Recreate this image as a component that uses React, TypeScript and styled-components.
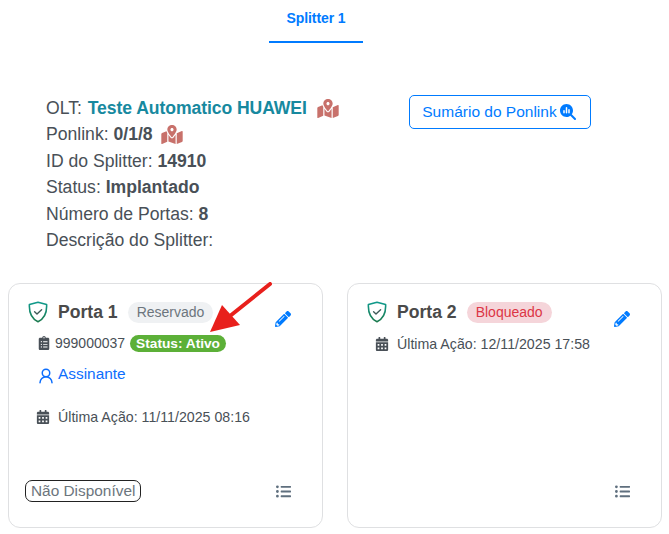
import React from 'react';
import styled, { createGlobalStyle } from 'styled-components';
import { FaMapMarkedAlt, FaPencilAlt, FaClipboardList, FaCalendarAlt, FaListUl } from 'react-icons/fa';
import { FaMagnifyingGlassChart } from 'react-icons/fa6';
import { LuUserRound } from 'react-icons/lu';

const GlobalStyle = createGlobalStyle`
  html, body {
    margin: 0;
    padding: 0;
    background: #fff;
    font-family: "Liberation Sans", Arial, sans-serif;
    color: #495057;
  }
`;

const ShieldIcon = ({ id }: { id: string }) => (
  <svg width="20" height="22" viewBox="0 0 20 22" fill="none">
    <defs>
      <linearGradient id={id} x1="0" y1="0" x2="0" y2="1">
        <stop offset="0" stopColor="#0f9a8c" />
        <stop offset="1" stopColor="#1c7a4e" />
      </linearGradient>
    </defs>
    <path
      d="M10 1.2 L18.6 3.6 C19 11 17 17.5 10 20.8 C3 17.5 1 11 1.4 3.6 Z"
      stroke={`url(#${id})`}
      strokeWidth="1.6"
      strokeLinejoin="round"
    />
    <path d="M6.6 10.8 L9 13 L13.6 8.8" stroke="#3f5a58" strokeWidth="1.4" strokeLinecap="round" strokeLinejoin="round" />
  </svg>
);

const App = () => {
  return (
    <Page>
      <GlobalStyle />
      <Tabs>
        <Tab>Splitter 1</Tab>
      </Tabs>

      <Summary>
        <Info>
          <Line>
            OLT: <OltLink>Teste Automatico HUAWEI</OltLink>
            <MapIcon />
          </Line>
          <Line>
            Ponlink: <b>0/1/8</b>
            <MapIcon />
          </Line>
          <Line>
            ID do Splitter: <b>14910</b>
          </Line>
          <Line>
            Status: <b>Implantado</b>
          </Line>
          <Line>
            Número de Portas: <b>8</b>
          </Line>
          <Line>Descrição do Splitter:</Line>
        </Info>
        <OutlineButton>
          Sumário do Ponlink
          <FaMagnifyingGlassChart size={16} />
        </OutlineButton>
      </Summary>

      <Cards>
        <Card>
          <CardHeader>
            <ShieldIcon id="shield-1" />
            <CardTitle>Porta 1</CardTitle>
            <Badge $tone="gray">Reservado</Badge>
            <EditIcon />
          </CardHeader>
          <SerialRow>
            <FaClipboardList size={14} />
            <span>999000037</span>
            <ActiveBadge>Status: Ativo</ActiveBadge>
          </SerialRow>
          <SubscriberRow>
            <LuUserRound size={18} />
            <span>Assinante</span>
          </SubscriberRow>
          <ActionRow $top={23}>
            <FaCalendarAlt size={14} />
            <span>Última Ação: 11/11/2025 08:16</span>
          </ActionRow>
          <CardFooter>
            <Unavailable>Não Disponível</Unavailable>
            <ListIcon />
          </CardFooter>
        </Card>

        <Card>
          <CardHeader>
            <ShieldIcon id="shield-2" />
            <CardTitle>Porta 2</CardTitle>
            <Badge $tone="red">Bloqueado</Badge>
            <EditIcon />
          </CardHeader>
          <ActionRow $top={11}>
            <FaCalendarAlt size={14} />
            <span>Última Ação: 12/11/2025 17:58</span>
          </ActionRow>
          <CardFooter>
            <span />
            <ListIcon />
          </CardFooter>
        </Card>
      </Cards>

      <Arrow width="70" height="56" viewBox="0 0 70 56">
        <path d="M62 2 L22 34" stroke="#e8201c" strokeWidth="4" strokeLinecap="round" />
        <path d="M2 50 L14 23 L32 43 Z" fill="#e8201c" />
      </Arrow>
    </Page>
  );
};

const Page = styled.div`
  position: relative;
  width: 669px;
  height: 534px;
  overflow: hidden;
  box-sizing: border-box;
`;

const Tabs = styled.div`
  display: flex;
  padding-left: 269px;
`;

const Tab = styled.div`
  width: 94px;
  height: 43px;
  box-sizing: border-box;
  padding-top: 10px;
  text-align: center;
  font-size: 14px;
  line-height: 16px;
  font-weight: 700;
  letter-spacing: -0.1px;
  color: #007bff;
  border-bottom: 2px solid #007bff;
`;

const Summary = styled.div`
  display: flex;
  align-items: flex-start;
  padding: 52px 0 0 46px;
`;

const Info = styled.div`
  width: 363px;
  font-size: 17.6px;
  line-height: 26.4px;
`;

const Line = styled.div`
  display: flex;
  align-items: center;
  white-space: pre;
  b {
    font-weight: 700;
  }
`;

const OltLink = styled.b`
  color: #17899f;
  margin: 0 2px 0 1px;
  letter-spacing: -0.08px;
`;

const MapIcon = styled(FaMapMarkedAlt)`
  width: 22px;
  height: 19px;
  margin-left: 8px;
  color: #c8716b;
`;

const OutlineButton = styled.div`
  display: flex;
  align-items: center;
  justify-content: center;
  gap: 3px;
  box-sizing: border-box;
  width: 182px;
  height: 34px;
  padding-right: 2px;
  border: 1px solid #007bff;
  border-radius: 5px;
  color: #007bff;
  font-size: 15.5px;
`;

const Cards = styled.div`
  display: grid;
  grid-template-columns: 315px 315px;
  gap: 24px;
  padding: 30px 0 0 8px;
`;

const Card = styled.div`
  display: flex;
  flex-direction: column;
  box-sizing: border-box;
  height: 245px;
  padding: 16px 31px 25px 18px;
  border: 1px solid #dfe0e2;
  border-radius: 12px;
`;

const CardHeader = styled.div`
  display: flex;
  align-items: center;
  height: 24px;
  padding-left: 1px;
`;

const CardTitle = styled.span`
  margin-left: 10px;
  font-size: 17.6px;
  font-weight: 700;
  color: #4a4a4a;
`;

const Badge = styled.span<{ $tone: 'gray' | 'red' }>`
  margin-left: 10px;
  padding: 0 9px;
  height: 21px;
  line-height: 21px;
  border-radius: 11px;
  font-size: 14px;
  background: ${(p) => (p.$tone === 'red' ? '#f5d5da' : '#eff1f3')};
  color: ${(p) => (p.$tone === 'red' ? '#dc3545' : '#6c757d')};
`;

const EditIcon = styled(FaPencilAlt)`
  width: 16px;
  height: 16px;
  margin-left: auto;
  margin-top: 13px;
  color: #007bff;
`;

const SerialRow = styled.div`
  display: flex;
  align-items: center;
  height: 18px;
  margin-top: 10px;
  padding-left: 10px;
  font-size: 14px;
  color: #495057;
  svg {
    margin-right: 4px;
  }
`;

const ActiveBadge = styled.span`
  margin-left: 5px;
  padding: 0 6px;
  height: 17px;
  line-height: 17px;
  border-radius: 9px;
  background: #5cb038;
  color: #fff;
  font-size: 13.7px;
  font-weight: 700;
`;

const SubscriberRow = styled.div`
  display: flex;
  align-items: center;
  margin-top: 10px;
  padding-left: 10px;
  color: #0d6efd;
  font-size: 15.4px;
  svg {
    margin: 5px 3px 0 0;
  }
`;

const ActionRow = styled.div<{ $top: number }>`
  display: flex;
  align-items: center;
  gap: 8px;
  height: 18px;
  margin-top: ${(p) => p.$top}px;
  padding-left: 9px;
  font-size: 14.2px;
  color: #495057;
`;

const CardFooter = styled.div`
  display: flex;
  align-items: center;
  justify-content: space-between;
  height: 22px;
  margin-top: auto;
`;

const Unavailable = styled.span`
  margin-left: -2px;
  padding: 0 5px;
  height: 20px;
  line-height: 20px;
  border: 1px solid #222;
  border-radius: 7px;
  font-size: 15.4px;
  color: #6c757d;
`;

const ListIcon = styled(FaListUl)`
  width: 15px;
  height: 15px;
  color: #5f6f7e;
`;

const Arrow = styled.svg`
  position: absolute;
  left: 208px;
  top: 282px;
`;

export default App;
